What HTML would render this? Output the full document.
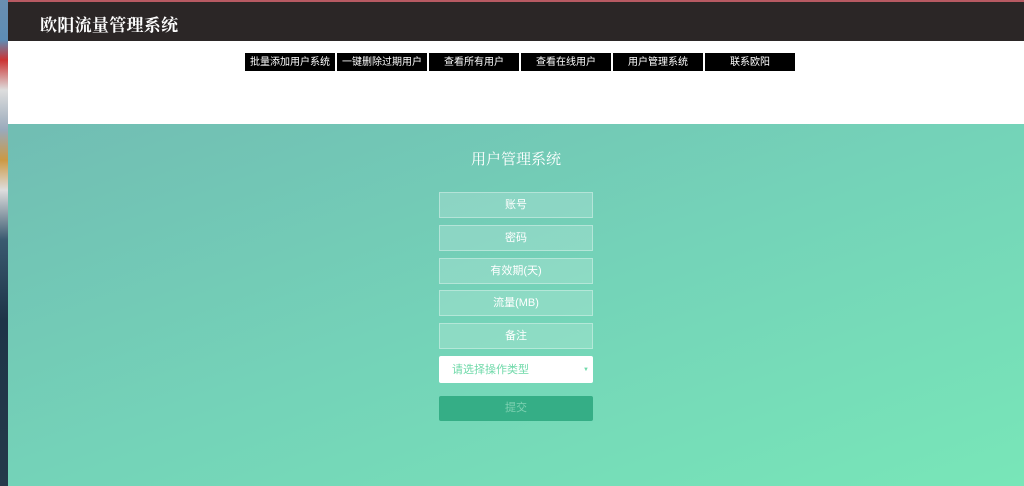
<!DOCTYPE html>
<html><head><meta charset="utf-8"><style>
*{margin:0;padding:0;box-sizing:border-box}
body{width:1024px;height:486px;overflow:hidden;position:relative;font-family:"Liberation Sans","Noto Sans CJK SC",sans-serif;background:#fff}
.strip{position:absolute;left:0;top:0;width:8px;height:486px;background:linear-gradient(#6a8fb0 0,#5d8db5 40px,#c33 60px,#ddd 90px,#9ab 130px,#c94 160px,#ddd 190px,#3a5a70 240px,#1e3448 320px,#25394a 486px)}
.page{position:absolute;left:8px;top:0;right:0;bottom:0}
.hdr{height:41px;background:#2b2626;border-top:2px solid #b85a62;color:#fff;font-family:"Noto Serif CJK SC",serif;font-size:17px;font-weight:bold;padding:9px 0 0 32px;letter-spacing:0.3px}
.nav{position:absolute;top:53px;left:237px;display:flex;gap:2px}
.nav div{width:90px;height:18px;background:#000;color:#fff;font-size:10px;text-align:center;line-height:19px}
.main{position:absolute;top:124px;left:0;right:0;bottom:0;background:linear-gradient(160deg,#71bdb3 0%,#74d3b8 50%,#78e6b8 100%)}
.title{position:absolute;top:24px;left:0;right:0;text-align:center;color:#fff;font-size:15px;font-family:"Noto Serif CJK SC",serif}
.f{position:absolute;left:431px;width:154px;height:26px;border:1px solid rgba(255,255,255,0.35);background:rgba(255,255,255,0.18);color:#fff;font-size:11px;text-align:center;line-height:25px}
.sel{position:absolute;left:431px;top:232px;width:154px;height:27px;background:#fff;border-radius:2px;color:#6fd9a9;font-size:11px;line-height:28px;padding-left:13px}
.sel span{position:absolute;right:4px;font-size:6px;color:#6fd9a9}
.btn{position:absolute;left:431px;top:272px;width:154px;height:25px;background:#35ae86;border-radius:2px;color:#7fd1b2;font-size:11px;text-align:center;line-height:25px}
</style></head><body>
<div class="strip"></div>
<div class="page">
<div class="hdr">欧阳流量管理系统</div>
<div class="nav"><div>批量添加用户系统</div><div>一键删除过期用户</div><div>查看所有用户</div><div>查看在线用户</div><div>用户管理系统</div><div>联系欧阳</div></div>
<div class="main">
<div class="title">用户管理系统</div>
<div class="f" style="top:68px">账号</div>
<div class="f" style="top:101px">密码</div>
<div class="f" style="top:134px">有效期(天)</div>
<div class="f" style="top:166px">流量(MB)</div>
<div class="f" style="top:199px">备注</div>
<div class="sel">请选择操作类型<span>▼</span></div>
<div class="btn">提交</div>
</div>
</div>
</body></html>
